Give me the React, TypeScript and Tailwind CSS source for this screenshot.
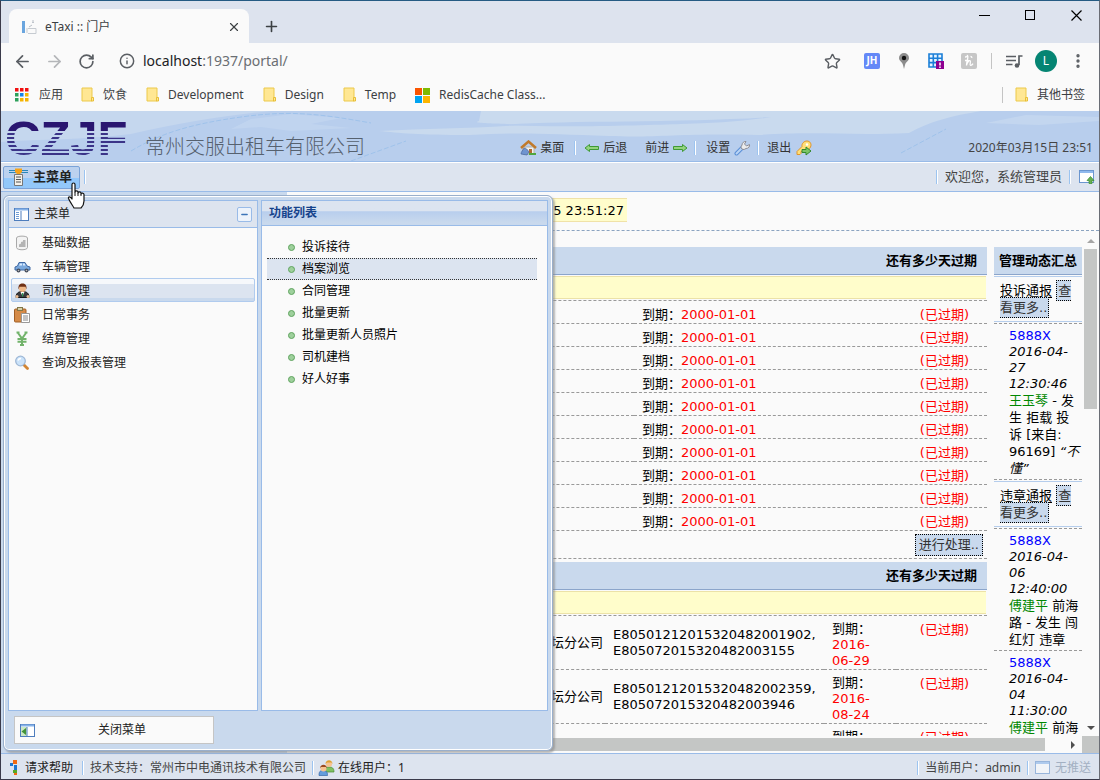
import React from "react";
import { ArrowLeft, ArrowRight, RotateCw, Info, Star, X, Plus, MoreVertical, Minus } from "lucide-react";

const bookmarks = ["饮食", "Development", "Design", "Temp"];

const menuItems = ["基础数据", "车辆管理", "司机管理", "日常事务", "结算管理", "查询及报表管理"];

const functions = ["投诉接待", "档案浏览", "合同管理", "批量更新", "批量更新人员照片", "司机建档", "好人好事"];

const expired = Array.from({ length: 10 }, () => "2000-01-01");

const certificates = [
  { company: "金坛分公司", codes: "E80501212015320482001902, E805072015320482003155", due: "2016-06-29" },
  { company: "金坛分公司", codes: "E80501212015320482002359, E805072015320482003946", due: "2016-08-24" },
  { company: "金坛分公司", codes: "E80501212015320482002360, E805072015320482003947", due: "2016-08-24" },
];

function Folder() {
  return (
    <svg width="14" height="16" viewBox="0 0 14 16" className="shrink-0">
      <path d="M1 1h10v13H1z" fill="#ffe793" stroke="#ecc94b" />
      <path d="M10.500 14v-3.500h2V14z" fill="#ffe793" stroke="#e8bf36" />
    </svg>
  );
}

function AppsIcon() {
  const colors = ["#f11010", "#f11010", "#f11010", "#2da05a", "#1683e8", "#f5b400", "#2da05a", "#f5b400", "#f5b400"];
  return (
    <svg width="14" height="14" viewBox="0 0 14 14" className="shrink-0">
      {colors.map((c, i) => (
        <rect key={i} x={(i % 3) * 5} y={Math.floor(i / 3) * 5} width="3.500" height="3.500" fill={c} />
      ))}
    </svg>
  );
}

function Separator() {
  return <span className="h-3.5 w-0.5 shrink-0 border-r border-white bg-[#9cc4f0]" />;
}

function Chrome() {
  return (
    <div className="shrink-0 bg-[#fafafa] font-['Noto_Sans','Noto_Sans_CJK_SC',sans-serif] text-xs text-[#3c4043]">
      <div className="flex h-[42px] bg-[#dde3ee]">
        <div className="mt-2 ml-2 flex w-60 items-center rounded-t-lg bg-[#fafafa] pt-0.5 pr-2 pl-3">
          <svg width="16" height="16" viewBox="0 0 16 16" className="mr-2 shrink-0">
            <path d="M1 2h3v12H1z" fill="#6aa5de" />
            <path d="M7 14.500h8v-5H7M7 9.500h8M11 3.500h2M6 14V9" fill="none" stroke="#c6cbd1" />
            <path d="M12 1v3M8 8l3-2" stroke="#b8bec6" />
          </svg>
          <span className="grow">eTaxi :: 门户</span>
          <button aria-label="关闭标签页">
            <X size={14} strokeWidth={2} />
          </button>
        </div>
        <button aria-label="新标签页" className="ml-3.5 pt-2">
          <Plus size={17} strokeWidth={2.300} />
        </button>
        <div className="ml-auto flex items-center gap-[35px] self-start pt-2 pr-[17px] text-black">
          <button aria-label="最小化"><svg width="11" height="12" className="block"><path d="M0 6.500h11" stroke="currentColor" /></svg></button>
          <button aria-label="最大化"><svg width="11" height="12" className="block"><rect x=".5" y="1.500" width="9" height="9" fill="none" stroke="currentColor" /></svg></button>
          <button aria-label="关闭"><svg width="11" height="12" className="block"><path d="M.5 1.500l10 10M10.500 1.500l-10 10" stroke="currentColor" strokeWidth="1.200" /></svg></button>
        </div>
      </div>
      <div className="flex h-9 items-center">
        <button aria-label="返回" className="ml-3"><ArrowLeft size={19} strokeWidth={2.200} className="text-[#5a5e63]" /></button>
        <button aria-label="前进一页" className="ml-[13px]"><ArrowRight size={19} strokeWidth={2.200} className="text-[#b4b6b9]" /></button>
        <button aria-label="重新加载" className="ml-3.5"><RotateCw size={17} strokeWidth={2.400} className="text-[#5a5e63]" /></button>
        <Info size={16} strokeWidth={2.200} className="mr-2 ml-6 text-[#5a5e63]" />
        <span className="text-sm text-[#6a6e73]"><span className="text-[#202124]">localhost</span>:1937/portal/</span>
        <div className="ml-auto flex items-center pr-4">
          <Star size={17} strokeWidth={2} className="mr-[23px] text-[#5a5e63]" />
          <span className="mr-[17px] flex size-4 items-center justify-center rounded-xs bg-[#6488f7] text-[10px] font-bold text-white">JH</span>
          <svg width="14" height="18" viewBox="0 0 14 18" className="mr-[17px]">
            <path d="M7 1a5 5 0 0 0-5 5c0 3 3.500 4 4 7l1 4 1-4c.5-3 4-4 4-7a5 5 0 0 0-5-5z" fill="#8c8c8c" />
            <circle cx="7" cy="6" r="2.200" fill="#111" />
          </svg>
          <svg width="17" height="17" viewBox="0 0 17 17" className="mr-4">
            <path d="M1 1h13v13H1zM1 5.300h13M1 9.600h13M5.300 1v13M9.600 1v13" fill="#e8f4ff" stroke="#1b7fd8" strokeWidth="1.600" />
            <path d="M8 8h8v8H8z" fill="#8e0090" />
            <path d="M12 9.500v3M12 13.500v1.500" stroke="#fff" strokeWidth="1.500" />
          </svg>
          <svg width="16" height="16" viewBox="0 0 16 16" className="mr-3.5">
            <rect width="16" height="16" rx="2" fill="#c6c6c6" />
            <path d="M4 4c1.500 0 2.500-1 2.500-1.500C8 3 5.500 8 5.500 12.500 6 9.500 8 7 9.200 7.800c1 .8-1 4.200.3 4.500 1 .2 2-.8 2.500-1.600M4 7.500h3.500M9.500 3.500c1 0 1.500.6 1.200 1.400" fill="none" stroke="#fff" strokeWidth="1.300" />
          </svg>
          <span className="mr-3 h-4 w-px bg-[#c4c4c4]" />
          <svg width="17" height="15" viewBox="0 0 17 15" className="mr-3 ml-0.5">
            <path d="M0 2.500h10M0 6.500h10M0 10.500h6.500M16.500 2h-3.500v9" fill="none" stroke="#5a5e63" strokeWidth="1.700" />
            <circle cx="11" cy="11.500" r="2.300" fill="#5a5e63" />
          </svg>
          <span className="mr-3 flex size-[22px] items-center justify-center rounded-full bg-[#058573] text-white">L</span>
          <button aria-label="更多"><MoreVertical size={18} strokeWidth={2.500} className="-mr-1 text-[#5a5e63]" /></button>
        </div>
      </div>
      <div className="flex h-8 items-center pr-3.5 pl-3.5">
        <a href="#apps" className="mr-[18px] flex items-center gap-2.5"><AppsIcon />应用</a>
        {bookmarks.map((b) => (
          <a key={b} href="#bookmark" className="mr-[19px] flex items-center gap-2"><Folder />{b}</a>
        ))}
        <a href="#redis" className="flex items-center gap-[9px]">
          <svg width="15" height="15" viewBox="0 0 15 15">
            <path d="M0 0h7v7H0z" fill="#fa5400" /><path d="M8 0h7v7H8z" fill="#7eb900" />
            <path d="M0 8h7v7H0z" fill="#00a3f1" /><path d="M8 8h7v7H8z" fill="#fcb500" />
          </svg>
          RedisCache Class...
        </a>
        <span className="mr-3 ml-auto h-4 w-px bg-[#c4c4c4]" />
        <a href="#others" className="flex items-center gap-2"><Folder />其他书签</a>
      </div>
    </div>
  );
}

function Logo() {
  return (
    <svg width="132" height="44" viewBox="0 0 132 44" className="shrink-0" role="img" aria-label="CZJF">
      <defs>
        <pattern id="stripes" width="132" height="44" patternUnits="userSpaceOnUse">
          <rect width="132" height="14" fill="#2a1670" />
          {[16, 20, 24, 28, 32, 36].map((y) => (
            <rect key={y} y={y} width="132" height="2" fill="#3b3488" />
          ))}
        </pattern>
      </defs>
      <text x="0" y="38" fontSize="49" fontWeight="700" fontFamily="Liberation Sans, sans-serif" fill="url(#stripes)">CZJF</text>
    </svg>
  );
}

function GreenArrow({ left = false }: { left?: boolean }) {
  return (
    <svg width="15" height="10" viewBox="0 0 15 10" className={left ? "rotate-180" : ""}>
      <path d="M.5 3.500H9.500V1.500l4.500 3.500-4.500 3.500V6.500H.5z" fill="#93d37f" stroke="#3f9a35" />
    </svg>
  );
}

function House() {
  return (
    <svg width="17" height="16" viewBox="0 0 17 16">
      <path d="M3 7h11v7H3z" fill="#f3f3ee" stroke="#b5b1a8" />
      <path d="M1 8l7.500-6.500L16 8" fill="none" stroke="#c07a2c" strokeWidth="2.500" />
      <path d="M9 9h3v5H9z" fill="#b36b32" />
      <path d="M1 14c0-2 2-4 3-6 2 0 3 1 5 4l-2 3z" fill="#6f94cf" stroke="#46649c" strokeWidth=".7" />
      <path d="M9 14h7" stroke="#4fa63d" strokeWidth="2" />
    </svg>
  );
}

function Wrench() {
  return (
    <svg width="17" height="16" viewBox="0 0 17 16">
      <path d="M2.500 13.500 8 8" stroke="#5b8fd6" strokeWidth="4" strokeLinecap="round" />
      <path d="M2.500 13.500 8 8" stroke="#b9d4f5" strokeWidth="2" strokeLinecap="round" />
      <path d="M7 8c0-1 .2-2 1-3 0-2 2-4 4-3.500L10.500 4l2 2L15.500 4.500c.5 2-1 4-3.500 4-1 .8-2 1-3 1z" fill="#ececec" stroke="#8d8d95" />
    </svg>
  );
}

function KeyIcon() {
  return (
    <svg width="17" height="16" viewBox="0 0 17 16">
      <path d="M2 14.500v-3l5-5c-.5-3 2-5.500 5-5.500s5 3 3.500 6-4 3-5 2.500L8 11.500H6v2l-1 1z" fill="#ffdf78" stroke="#e0952b" />
      <circle cx="12" cy="4.500" r="1.200" fill="#fff" />
      <path d="M7 9.500h4V7l5 4-5 4v-2.500H7z" fill="#7cc467" stroke="#34892c" />
    </svg>
  );
}

function WindowIcon({ arrow = false }: { arrow?: boolean }) {
  return (
    <svg width="16" height="14" viewBox="0 0 16 14" className="shrink-0">
      <rect x=".5" y=".5" width="14" height="12" fill="#fff" stroke="#6b96cf" />
      <path d="M1 2h13" stroke="#90b9ed" strokeWidth="2" />
      {arrow && <path d="M11.500 6.500l3.500 4h-2V13.500h-3V10.500H8z" fill="#68b054" stroke="#378c2e" strokeWidth=".7" />}
    </svg>
  );
}

function PanelIcon({ back = false }: { back?: boolean }) {
  return (
    <svg width="16" height="13" viewBox="0 0 16 13" className="shrink-0">
      <rect x=".5" y=".5" width="14" height="12" fill="#fff" stroke="#4e7dbd" />
      <path d="M1 1.500h13" stroke="#86b2e8" strokeWidth="2" />
      {back ? (
        <>
          <path d="M1 3h6v9H1z" fill="#cce8c4" />
          <path d="M6 4v7L1.500 7.500z" fill="#429338" />
        </>
      ) : (
        <path d="M2 4.500h3M2 6.500h3M2 8.500h3M2 10.500h3" stroke="#6f9bd4" />
      )}
      <path d="M7 3v9" stroke="#4e7dbd" />
    </svg>
  );
}

function MenuIcon({ index }: { index: number }) {
  return (
    <svg width="17" height="16" viewBox="0 0 17 16" className="shrink-0">
      {index === 0 && (
        <>
          <path d="M2.500 3c0-2.500 11-2.500 11 0v9.500c0 3-11 3-11 0z" fill="#f3f3f3" stroke="#a9a9a9" />
          <path d="M5 12V9.500l2-1V7l2-.5V5h2.500v7z" fill="#b4b4b4" />
        </>
      )}
      {index === 1 && (
        <>
          <path d="M1 11V8l2.500-1L5 3.500h6L13 7l3 1v3z" fill="#7aa8dc" stroke="#3f68a3" />
          <path d="M5 6.500l1-2h2v2zM9 4.500h1.500l1 2H9z" fill="#dcecff" />
          <circle cx="4.500" cy="11.500" r="2" fill="#454c5a" /><circle cx="12.500" cy="11.500" r="2" fill="#454c5a" />
          <circle cx="4.500" cy="11.500" r=".8" fill="#bbb" /><circle cx="12.500" cy="11.500" r=".8" fill="#bbb" />
        </>
      )}
      {index === 2 && (
        <>
          <path d="M2 14.500c0-4 2-6 6.500-6s6.500 2 6.500 6z" fill="#3a3a3e" stroke="#161618" />
          <circle cx="3" cy="13.500" r="1.500" fill="#eebf94" /><circle cx="14" cy="13.500" r="1.500" fill="#eebf94" />
          <path d="M6.500 9h4L8.500 13z" fill="#fff" /><path d="M8 10h1.200v3.500H8z" fill="#2d9455" />
          <circle cx="8.500" cy="5.500" r="3.500" fill="#f0b988" />
          <path d="M4.500 6.500c-.5-4.500 1.500-6 4-6s4.500 1.500 4 6l-1-2.700H5.500z" fill="#703014" />
        </>
      )}
      {index === 3 && (
        <>
          <rect x=".5" y="2" width="11.500" height="13" rx="1" fill="#d58b48" stroke="#a15f25" />
          <rect x="3.500" y=".5" width="5" height="3" fill="#d8d0a8" stroke="#837646" />
          <path d="M7.500 6.500h8v9h-8z" fill="#fff" stroke="#999" />
          <path d="M9 9h5M9 11h5M9 13h5" stroke="#888" />
        </>
      )}
      {index === 4 && <path d="M2.500 1.500h3M10.500 1.500h3M4 2l4 5.500L12 2M8 7v7M3.500 8h9M3.500 10.800h9M6 14h4" fill="none" stroke="#72b36b" strokeWidth="2" />}
      {index === 5 && (
        <>
          <path d="M9.500 9.500l4 4" stroke="#d18535" strokeWidth="2.800" strokeLinecap="round" />
          <circle cx="6.500" cy="6" r="4.800" fill="#cbe3fa" stroke="#9fb8d6" strokeWidth="1.300" />
          <path d="M4 5.500c.4-1.500 1.500-2 3-2" fill="none" stroke="#fff" strokeWidth="1.300" />
        </>
      )}
    </svg>
  );
}

function HeaderBackdrop() {
  return (
    <svg className="absolute inset-0 h-full w-full" viewBox="0 0 1098 50" preserveAspectRatio="none">
      <rect width="1098" height="50" fill="#b8ceed" />
      <path d="M0 0h270c-50 5-90 12-140 23-50 6-90 5-130 8z" fill="#c5d7ee" />
      <path d="M250 8l40-5 50 4-30 6 40 4-60 3-30-4-30 2z" fill="#c0d4ef" />
      <path d="M480 0h500c-30 5-50 10-72 22-60 3-90-2-150 2-80-2-100 3-150 1-60-2-90-4-140-1-50 0-70-2-90-4 50-3 90-2 140-6-20-2-50-1-40-4z" fill="#c9daee" />
      <path d="M500 14c60-5 180-2 270-8-30 5-60 6-90 7s-120 4-180 1z" fill="#b8ceed" />
      <path d="M985 12l40-8 73 2v4l-60 4z" fill="#c3d6ef" />
      <path d="M130 40c30-18 60-27 110-34s80-3 130 6M350 50l55-20M900 42l45-24" fill="none" stroke="#98bfea" strokeWidth=".8" strokeDasharray="5 2" />
    </svg>
  );
}

function TopArea() {
  return (
    <div className="shrink-0 text-xs text-[#333]">
      <header className="relative h-[50px]">
        <HeaderBackdrop />
        <div className="relative flex h-full items-end pr-1.5 pl-1">
          <Logo />
          <h1 className="ml-2 text-xl leading-7 font-light whitespace-nowrap text-[#56616f]">常州交服出租车有限公司</h1>
          <nav className="mr-[156px] mb-[3px] ml-auto flex h-5 items-center whitespace-nowrap">
            <button className="flex items-center gap-[3px]"><House />桌面</button>
            <span className="mr-2 ml-2.5 flex"><Separator /></span>
            <button className="mr-[18px] flex items-center gap-1"><GreenArrow left />后退</button>
            <button className="flex items-center gap-1">前进<GreenArrow /></button>
            <span className="mr-2.5 ml-1.5 flex"><Separator /></span>
            <button className="flex items-center gap-1">设置<Wrench /></button>
            <span className="mr-2 ml-1.5 flex"><Separator /></span>
            <button className="flex items-center gap-1">退出<KeyIcon /></button>
          </nav>
          <time className="mb-[3px] leading-5 whitespace-nowrap text-[#444]">2020年03月15日 23:51</time>
        </div>
      </header>
      <div className="flex h-[31px] items-center border-y border-[#99bbe8] bg-[#dde4ef] pr-1 pl-0.5 text-[13px] shadow-[inset_0_1px_0_white]">
        <button className="mt-px mr-1 flex h-[23px] w-[77px] items-center gap-[5px] rounded-xs border border-[#7ba3d8] bg-linear-to-b from-[#bcd2ef] from-50% to-[#93c8fa] to-50% pl-[5px] font-bold text-[#222]">
          <svg width="19" height="18" viewBox="0 0 19 18" className="shrink-0">
            <path d="M0 2.500h19M0 4.500h19" stroke="#2a87b8" />
            <path d="M6 .5h7v3.500l-2 2H8L6 4z" fill="#f5a31c" />
            <path d="M5.500 6.500h8v11h-8z" fill="#f4f1ea" stroke="#777" />
            <path d="M7 9h5M7 11.500h5M7 14h5" stroke="#555" />
          </svg>
          主菜单
        </button>
        <Separator />
        <span className="ml-auto flex"><Separator /></span>
        <span className="mx-[7px] text-[#444]">欢迎您，系统管理员</span>
        <Separator />
        <button aria-label="新窗口" className="ml-2"><WindowIcon arrow /></button>
      </div>
    </div>
  );
}

function MenuPopup() {
  return (
    <div className="absolute top-[3px] bottom-0.5 left-0.5 flex w-[550px] flex-col rounded-md border border-[#9aafcb] bg-[#c9d9ed] px-[3px] pt-[3px] text-xs text-[#222] shadow-[inset_0_0_0_1px_white,2px_2px_2px_#8889]">
      <div className="flex min-h-0 grow gap-[3px] px-px pt-px">
        <section className="flex w-[250px] flex-col border border-[#99bbe8] bg-[#fafafa]">
          <div className="flex h-[27px] items-center border-b border-[#99bbe8] bg-[#dde4ef] px-[5px]">
            <PanelIcon />
            <h2 className="ml-1 grow">主菜单</h2>
            <button aria-label="折叠" className="flex size-[15px] items-center justify-center rounded-xs border border-[#99bbe8] bg-[#edf3fb] text-[#3c74b8]">
              <Minus size={9} strokeWidth={4} />
            </button>
          </div>
          <ul className="px-0.5 pt-0.5">
            {menuItems.map((m, i) => (
              <li key={m}>
                <button className={i === 2
                  ? "flex h-6 w-full items-center gap-[11px] rounded-xs border border-[#b0cbee] bg-[#dce4f0] px-0.5 pt-0.5 shadow-[inset_0_5px_0_#f6f8fb,inset_0_-3px_0_#c9d9ed]"
                  : "flex h-6 w-full items-center gap-[11px] border border-transparent px-0.5 pt-0.5"}>
                  <MenuIcon index={i} />
                  {m}
                </button>
              </li>
            ))}
          </ul>
        </section>
        <section className="grow border border-[#99bbe8] bg-[#fafafa]">
          <h2 className="h-[25px] border-b border-[#99bbe8] bg-linear-to-b from-[#dce4f0] from-40% via-[#b8ceed] via-45% to-[#c9d9ed] to-90% pl-[7px] leading-6 font-bold text-[#15428b]">功能列表</h2>
          <ul className="pt-2.5 pr-2.5 pl-[5px]">
            {functions.map((f, i) => (
              <li key={f} className={i === 1 ? "border-y border-dotted border-[#333] bg-[#dce4f0]" : "border-y border-transparent"}>
                <a href="#function" className="flex h-5 items-center gap-[7px] pl-[21px] text-black">
                  <span className="size-[7px] rounded-full border border-[#5fa45f] bg-[#9ed09c]" />
                  {f}
                </a>
              </li>
            ))}
          </ul>
        </section>
      </div>
      <div className="px-[7px] pt-[5px] pb-1.5">
        <button className="flex h-7 w-[200px] items-center border border-[#c5c5c5] bg-[#fafafa] pr-[5px] pl-[5px]">
          <PanelIcon back />
          <span className="grow text-center">关闭菜单</span>
        </button>
      </div>
    </div>
  );
}

const th = "h-7 border-b border-[#8ba5cb] bg-[#c9d9ed] p-0 pr-2.5 text-right font-bold";
const td = "border-b border-dashed border-[#999] p-0 pl-2";

function NoticeRow({ span }: { span: number }) {
  return (
    <tr>
      <td colSpan={span} className="h-[26px] border-b border-dashed border-[#999] p-0 pr-px">
        <div className="h-[23px] border-y border-[#ece2a8] bg-[#fffdcb]" />
      </td>
    </tr>
  );
}

function MoreLink() {
  return <a href="#more" className="border border-dotted border-black bg-[#c9d9ed] px-px py-0.5 text-[#333]">查看更多..</a>;
}

function NewsItem({ time, name, children }: { time: string; name: string; children: React.ReactNode }) {
  return (
    <li className="border-b border-dashed border-[#999] pt-1 pb-0.5 pl-[15px]">
      <div className="leading-4">
        <a href="#car" className="text-[#00f]">5888X</a>
        <time className="block italic">{time}</time>
      </div>
      <p className="leading-[17px]"><span className="text-[#080]">{name}</span> {children}</p>
    </li>
  );
}

function NewsHead({ title }: { title: string }) {
  return (
    <div className="my-px border-y border-[#b5cdec] py-[5px] pr-2 pl-1.5 leading-[17px]">
      <a href="#news" className="underline underline-offset-2">{title}</a> <MoreLink />
    </div>
  );
}

function Content() {
  return (
    <main className="flex min-w-0 grow flex-col bg-[#fafafa] font-['DejaVu_Sans','Noto_Sans_CJK_SC',sans-serif] text-[13px] text-black">
      <div className="h-[39px] shrink-0 border-b border-dashed border-[#8ba3c0] pt-1.5">
        <div className="h-6 w-[340px] border-y border-[#f0e2a8] bg-[#fffdcb] pr-[3px] text-right leading-6">2020-03-15 23:51:27</div>
      </div>
      <div className="flex min-h-0 grow">
        <div className="flex min-w-0 grow gap-[7px] overflow-hidden pt-4 pl-1.5">
          <div className="min-w-0 grow">
            <table className="mb-[3px] w-full table-fixed border-separate border-spacing-0">
              <colgroup><col className="w-[341px]" /><col /><col className="w-[107px]" /></colgroup>
              <thead><tr><th className={th} colSpan={3}>还有多少天过期</th></tr></thead>
              <tbody>
                <NoticeRow span={3} />
                {expired.map((d, i) => (
                  <tr key={i}>
                    <td className={`${td} h-[23px]`} />
                    <td className={`${td} pt-[5px] leading-[17px]`}>到期：<span className="text-[#f00]">{d}</span></td>
                    <td className={`${td} pt-[5px] pr-[18px] text-right leading-[17px] text-[#f00]`}>(已过期)</td>
                  </tr>
                ))}
                <tr>
                  <td colSpan={3} className={`${td} h-7 pr-1 text-right`}>
                    <a href="#process" className="inline-block border border-dotted border-black bg-[#c9d9ed] px-[3px] leading-5 text-[#333]">进行处理..</a>
                  </td>
                </tr>
              </tbody>
            </table>
            <table className="w-full table-fixed border-separate border-spacing-0">
              <colgroup><col /><col className="w-[75px]" /><col className="w-[219px]" /><col className="w-[72px]" /><col className="w-[91px]" /></colgroup>
              <thead><tr><th className={th} colSpan={5}>还有多少天过期</th></tr></thead>
              <tbody>
                <NoticeRow span={5} />
                {certificates.map((c, i) => (
                  <tr key={i}>
                    <td className={`${td} h-[54px]`} />
                    <td className={td}>{c.company}</td>
                    <td className={`${td} leading-4`}>{c.codes}</td>
                    <td className={`${td} pt-[5px] pr-2 align-top leading-4`}>到期： <span className="text-[#f00]">{c.due}</span></td>
                    <td className={`${td} pt-[5px] pr-[18px] text-right align-top leading-[17px] text-[#f00]`}>(已过期)</td>
                  </tr>
                ))}
              </tbody>
            </table>
          </div>
          <aside className="w-[88px] shrink-0">
            <h2 className="h-7 border-b border-[#8ba5cb] bg-[#c9d9ed] text-center leading-7 font-bold whitespace-nowrap">管理动态汇总</h2>
            <NewsHead title="投诉通报" />
            <ul className="border-t border-dashed border-[#999]">
              <NewsItem time="2016-04-27 12:30:46" name="王玉琴">- 发生 拒载 投诉 [来自: 96169] <i>“不懂”</i></NewsItem>
            </ul>
            <NewsHead title="违章通报" />
            <ul className="border-t border-dashed border-[#999]">
              <NewsItem time="2016-04-06 12:40:00" name="傅建平">前海路 - 发生 闯红灯 违章</NewsItem>
              <NewsItem time="2016-04-04 11:30:00" name="傅建平">前海路 - 发生 闯红灯 违章</NewsItem>
            </ul>
          </aside>
        </div>
        <div className="flex w-[17px] shrink-0 flex-col items-center bg-[#fafafa] pt-2 pb-1.5">
          <svg width="8" height="4" viewBox="0 0 8 4"><path d="M4 0l4 4H0z" fill="#a5a5a5" /></svg>
          <div className="mt-1.5 h-40 w-[13px] bg-[#c4c6c5]" />
          <svg width="8" height="4" viewBox="0 0 8 4" className="mt-auto"><path d="M0 0h8L4 4z" fill="#505050" /></svg>
        </div>
      </div>
      <div className="flex h-[17px] shrink-0 items-center">
        <div className="mr-[26px] h-[13px] grow bg-[#c4c6c5]" />
        <svg width="4" height="8" viewBox="0 0 4 8" className="mr-[7px]"><path d="M0 0l4 4-4 4z" fill="#505050" /></svg>
        <div className="h-full w-[17px] bg-[#c4c6c5]" />
      </div>
    </main>
  );
}

function Footer() {
  return (
    <footer className="flex h-[26px] shrink-0 items-center border-t border-[#99bbe8] bg-[#dde4ef] pt-0.5 pr-2 pl-2 text-xs whitespace-nowrap text-[#444]">
      <button className="flex items-center gap-1.5 text-[#222]">
        <svg width="10" height="15" viewBox="0 0 10 15">
          <path d="M4 0h4v4H4z" fill="#f06a10" /><path d="M1 3h3v3H1zM5 5h3v5H5z" fill="#1b76cf" />
          <path d="M4 10h4v3H4z" fill="#58a728" /><path d="M5 13h3v2H5z" fill="#f06a10" />
        </svg>
        请求帮助
      </button>
      <span className="mr-1.5 ml-[9px] flex"><Separator /></span>
      <span>技术支持：常州市中电通讯技术有限公司</span>
      <span className="mr-1 ml-1.5 flex"><Separator /></span>
      <button className="flex items-center gap-[3px] text-[#222]">
        <svg width="17" height="16" viewBox="0 0 17 16">
          <path d="M7 12c0-4 1-5 4-5s5 1 5 5z" fill="#80c161" stroke="#468a34" strokeWidth=".7" />
          <circle cx="11" cy="4" r="3" fill="#f6c391" /><path d="M7.500 4c0-5 7-5 7 0l-1-1.500H9z" fill="#dfa02f" />
          <path d="M1 15.500c0-4 1-5 4-5s4.500 1 4.500 5z" fill="#649ddc" stroke="#3769a7" strokeWidth=".7" />
          <circle cx="5.500" cy="8.500" r="3" fill="#f6c391" /><path d="M2 8.500c0-5 7-5 7 0l-1-1.500H3z" fill="#9b4b20" />
        </svg>
        在线用户：1
      </button>
      <span className="mr-1.5 ml-auto flex"><Separator /></span>
      <span>当前用户：admin</span>
      <span className="mr-1.5 ml-1.5 flex"><Separator /></span>
      <span className="flex items-center gap-1 text-[#a3b0c2]"><span className="opacity-60"><WindowIcon /></span>无推送</span>
    </footer>
  );
}

export default function App() {
  return (
    <div className="flex h-screen flex-col overflow-hidden border border-[#3a3a4a] border-t-[#255b83] border-r-[#6a6d75] font-['Noto_Sans','Noto_Sans_CJK_SC',sans-serif]">
      <Chrome />
      <TopArea />
      <div className="relative flex min-h-0 grow">
        <div className="w-[286px] shrink-0 bg-[#c9d9ed]" />
        <Content />
        <MenuPopup />
        <svg width="20" height="28" viewBox="0 0 20 28" className="absolute -top-2.5 left-[66px]">
          <path d="M5 2.500c0-2 3-2 3 0V10c0-1.500 3-1.500 3 0v1c0-1.500 3-1.500 3 0v1c0-1.500 3-1.200 3 .5V19c0 4-2 6-3 7H7c-1-2-4-6-5.500-9.500C1 14.500 3 14 5 17z" fill="#fff" stroke="#111" strokeWidth="1.200" strokeLinejoin="round" />
          <path d="M8 10v4M11 11v3M14 12v2" stroke="#111" />
        </svg>
      </div>
      <Footer />
    </div>
  );
}
